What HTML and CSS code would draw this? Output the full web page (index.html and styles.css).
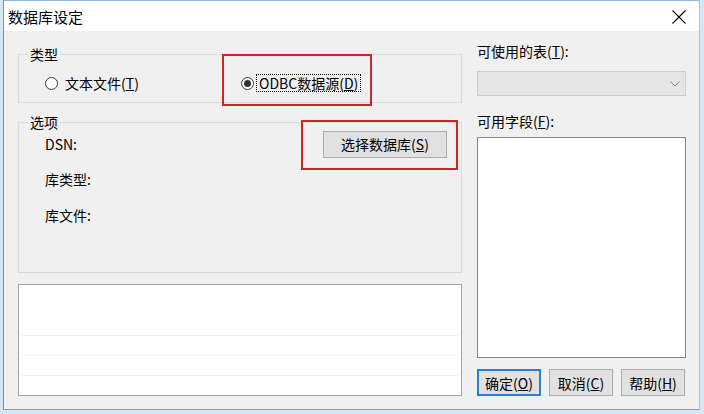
FILE: index.html
```html
<!DOCTYPE html>
<html lang="zh-CN">
<head>
  <meta charset="UTF-8">
  <title>数据库设定</title>
  <link rel="stylesheet" href="styles.css">
</head>
<body>

  <div class="window">
    <!-- タイトルバー -->
    <div class="titlebar">
      <span class="title">数据库设定</span>
      <svg class="close" width="14" height="14" viewBox="0 0 14 14">
        <path d="M0.5 0.5 L13.5 13.5 M13.5 0.5 L0.5 13.5" stroke="#000" stroke-width="1.1" fill="none"/>
      </svg>
    </div>

    <div class="client">
      <!-- 左カラム -->
      <div class="left">
        <fieldset class="group group-type">
          <legend>类型</legend>
          <div class="radios">
            <label class="radio"><span class="dot"></span><span>文本文件(<u>T</u>)</span></label>
            <label class="radio checked"><span class="dot"></span><span class="focus">ODBC数据源(<u>D</u>)</span></label>
          </div>
          <div class="mark mark-odbc"></div>
        </fieldset>

        <fieldset class="group group-opt">
          <legend>选项</legend>
          <div class="row row-dsn">
            <span>DSN:</span>
            <button class="btn">选择数据库(<u>S</u>)</button>
          </div>
          <div class="row row-type">库类型:</div>
          <div class="row row-file">库文件:</div>
          <div class="mark mark-select"></div>
        </fieldset>

        <div class="listbox log">
          <div class="log-top"></div>
          <div class="log-line"></div>
          <div class="log-line"></div>
          <div class="log-line"></div>
        </div>
      </div>

      <!-- 右カラム -->
      <div class="right">
        <div class="label label-table">可使用的表(<u>T</u>):</div>
        <div class="combo">
          <svg width="10" height="6" viewBox="0 0 10 6">
            <path d="M0.5 0.5 L5 5 L9.5 0.5" stroke="#8a8a8a" stroke-width="1" fill="none"/>
          </svg>
        </div>
        <div class="label label-field">可用字段(<u>F</u>):</div>
        <div class="listbox fields"></div>
        <div class="buttons">
          <button class="btn btn-default">确定(<u>O</u>)</button>
          <button class="btn">取消(<u>C</u>)</button>
          <button class="btn">帮助(<u>H</u>)</button>
        </div>
      </div>
    </div>
  </div>

</body>
</html>
```

FILE: styles.css
```css
/* 全体 */
body {
  margin: 0;
  background: #d6e6f5;
  font-family: "Noto Sans CJK SC", sans-serif;
  font-size: 14px;
  color: #000;
}

.window {
  margin-left: 3px;
  width: 697px;
  height: 410px;
  box-sizing: border-box;
  border-left: 1px solid #7f8fa0;
  border-right: 1px solid #a9c4de;
  border-bottom: 1px solid #8d9aa6;
  border-top: 1px solid #8fb6dc;
  background: #f0f0f0;
}

/* タイトルバー */
.titlebar {
  height: 30px;
  background: #fff;
  display: flex;
  align-items: center;
  justify-content: space-between;
  padding: 0 13px 0 4px;
}

.title {
  font-size: 15px;
  line-height: 18px;
  margin-top: 2px;
}

.close {
  margin-top: 2px;
}

/* クライアント領域 */
.client {
  display: flex;
  gap: 15px;
  padding: 0 13px 0 14px;
  height: 378px;
}

.left {
  width: 444px;
  display: flex;
  flex-direction: column;
}

.right {
  width: 209px;
  display: flex;
  flex-direction: column;
}

/* グループボックス */
.group {
  position: relative;
  margin: 0;
  padding: 0;
  border: 1px solid #dcdcdc;
  box-sizing: border-box;
  min-width: 0;
}

.group legend {
  margin-left: 9px;
  padding: 0 2px;
  line-height: 16px;
}

.group-type {
  margin-top: 15px;
  height: 57px;
}

.group-opt {
  margin-top: 11px;
  height: 159px;
}

/* ラジオボタン */
.radios {
  display: flex;
  padding: 13px 0 0 26px;
}

.radio {
  display: flex;
  align-items: center;
  line-height: 16px;
  gap: 7px;
}

.radio:first-child {
  width: 196px;
}

.radio.checked {
  gap: 3px;
}

.dot {
  width: 13px;
  height: 13px;
  box-sizing: border-box;
  border: 1px solid #3c3c3c;
  border-radius: 50%;
  background: #fff;
  display: flex;
  align-items: center;
  justify-content: center;
}

.radio.checked .dot::after {
  content: "";
  width: 7px;
  height: 7px;
  border-radius: 50%;
  background: #333;
}

.focus {
  outline: 1px dotted #000;
  padding: 0 2px;
}

/* オプション行 */
.row {
  padding-left: 26px;
  line-height: 16px;
}

.row-dsn {
  display: flex;
  align-items: center;
  justify-content: space-between;
  height: 28px;
  padding-right: 14px;
}

.row-type {
  margin-top: 13px;
}

.row-file {
  margin-top: 20px;
}

/* ボタン */
.btn {
  font-family: "Noto Sans CJK SC", sans-serif;
  font-size: 14px;
  line-height: 16px;
  color: #000;
  background: #e1e1e1;
  border: 1px solid #adadad;
  padding: 0;
  height: 27px;
}

.row-dsn .btn {
  width: 124px;
}

.btn-default {
  border: 2px solid #2c7fd0;
}

/* 赤枠（注釈） */
.mark {
  position: absolute;
  border: 2px solid #d2232a;
  box-sizing: border-box;
}

.mark-odbc {
  left: 203px;
  top: -8px;
  width: 150px;
  height: 52px;
}

.mark-select {
  left: 282px;
  top: -10px;
  width: 157px;
  height: 50px;
}

/* リストボックス */
.listbox {
  background: #fff;
  border: 1px solid #828790;
  box-sizing: border-box;
}

.log {
  margin-top: 11px;
  height: 112px;
  border-color: #a0a0a0;
  padding: 0 3px;
}

.log-top {
  height: 50px;
}

.log-line {
  height: 20px;
  border-top: 1px solid #f0f0f0;
  box-sizing: border-box;
}

/* 右側 */
.label {
  line-height: 16px;
}

.label-table {
  margin-top: 12px;
}

.combo {
  margin-top: 12px;
  height: 25px;
  box-sizing: border-box;
  border: 1px solid #cccccc;
  background: #e5e5e5;
  display: flex;
  align-items: center;
  justify-content: flex-end;
  padding-right: 5px;
}

.label-field {
  margin-top: 17px;
}

.fields {
  margin-top: 8px;
  height: 221px;
}

.buttons {
  display: flex;
  gap: 8px;
  margin-top: 11px;
}

.buttons .btn {
  width: 64px;
}
```
